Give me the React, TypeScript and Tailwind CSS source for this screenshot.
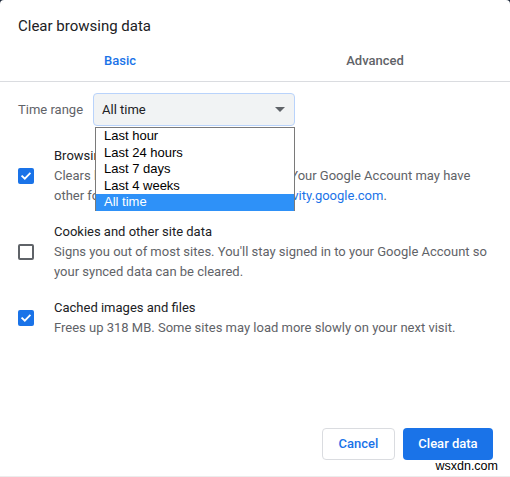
import React from "react";

const Check = ({ checked }: { checked: boolean }) =>
  checked ? (
    <div className="w-4 h-4 shrink-0 rounded-[2px] bg-[#1a73e8] flex items-center justify-center">
      <svg width="12" height="12" viewBox="0 0 12 12">
        <path d="M2.2 6.2 L4.8 8.7 L9.8 3.5" fill="none" stroke="#fff" strokeWidth="1.8" strokeLinecap="square" />
      </svg>
    </div>
  ) : (
    <div className="w-4 h-4 shrink-0 rounded-[2px] border-2 border-[#5f6368] bg-white" />
  );

export default function App() {
  const opts = ["Last hour", "Last 24 hours", "Last 7 days", "Last 4 weeks", "All time"];
  return (
    <div className="w-[510px] h-[477px] bg-[#1c2738] font-['Roboto',sans-serif]">
      <div className="relative w-full h-full bg-white rounded-t-[4px] flex flex-col border-b border-[#ececec]">
        <div className="pt-4 px-[18px] text-[15px] leading-5 text-[#202124]">Clear browsing data</div>
        <div className="flex h-[46px] border-b border-[#dadce0] text-[13px] font-medium leading-5">
          <div className="w-[240px] pt-[15px] text-center text-[#1a73e8]">Basic</div>
          <div className="flex-1 pt-[15px] text-center text-[#5f6368]">Advanced</div>
        </div>
        <div className="mt-[11px] px-[18px] flex items-center text-[13px]">
          <div className="w-[75px] text-[#5f6368]">Time range</div>
          <div className="relative w-[202px] h-[33px] rounded-[4px] border border-[#b9d3fb] bg-[#f1f3f4] flex items-center justify-between pl-[8px] pr-[9px] text-[#202124]">
            <span>All time</span>
            <svg width="10" height="5" viewBox="0 0 10 5">
              <path d="M0 0 L10 0 L5 5 Z" fill="#5f6368" />
            </svg>
            <div className="absolute top-[33px] left-[1px] w-[200px] bg-white border border-[#7a7a7a] border-b-0 z-10 font-['Liberation_Sans',Arial,sans-serif] text-[13px]">
              {opts.map((o, i) => (
                <div
                  key={o}
                  className={
                    i === 4
                      ? "h-[16.6px] leading-[16.6px] pl-[8px] bg-[#2e91f8] text-white"
                      : "h-[16.6px] leading-[16.6px] pl-[8px] text-black"
                  }
                >
                  {o}
                </div>
              ))}
            </div>
          </div>
        </div>
        <div className="mt-[20px] px-[18px] flex flex-col gap-4 text-[13px] leading-5">
          <div className="flex items-center gap-5">
            <Check checked />
            <div className="whitespace-nowrap">
              <div className="text-[#202124]">Browsing history</div>
              <div className="text-[#5f6368]">
                Clears history from all signed-in devices. Your Google Account may have
                <br />
                other forms of browsing history at <span className="text-[#1a73e8]">myactivity.google.com</span>.
              </div>
            </div>
          </div>
          <div className="flex items-center gap-5">
            <Check checked={false} />
            <div className="whitespace-nowrap">
              <div className="text-[#202124]">Cookies and other site data</div>
              <div className="text-[#5f6368]">
                Signs you out of most sites. You'll stay signed in to your Google Account so
                <br />
                your synced data can be cleared.
              </div>
            </div>
          </div>
          <div className="flex items-center gap-5">
            <Check checked />
            <div className="whitespace-nowrap">
              <div className="text-[#202124]">Cached images and files</div>
              <div className="text-[#5f6368]">Frees up 318 MB. Some sites may load more slowly on your next visit.</div>
            </div>
          </div>
        </div>
        <div className="mt-auto flex justify-end gap-2 pr-[17px] pb-[16px] text-[13px] font-medium">
          <button className="w-[73px] h-8 rounded-[4px] border border-[#dadce0] bg-white text-[#1a73e8]">Cancel</button>
          <button className="w-[90px] h-8 rounded-[4px] bg-[#1a73e8] text-white">Clear data</button>
        </div>
        <div className="absolute right-[12px] bottom-[3px] leading-[14px] text-[12.5px] text-black font-['Liberation_Sans',Arial,sans-serif]">
          wsxdn.com
        </div>
      </div>
    </div>
  );
}
